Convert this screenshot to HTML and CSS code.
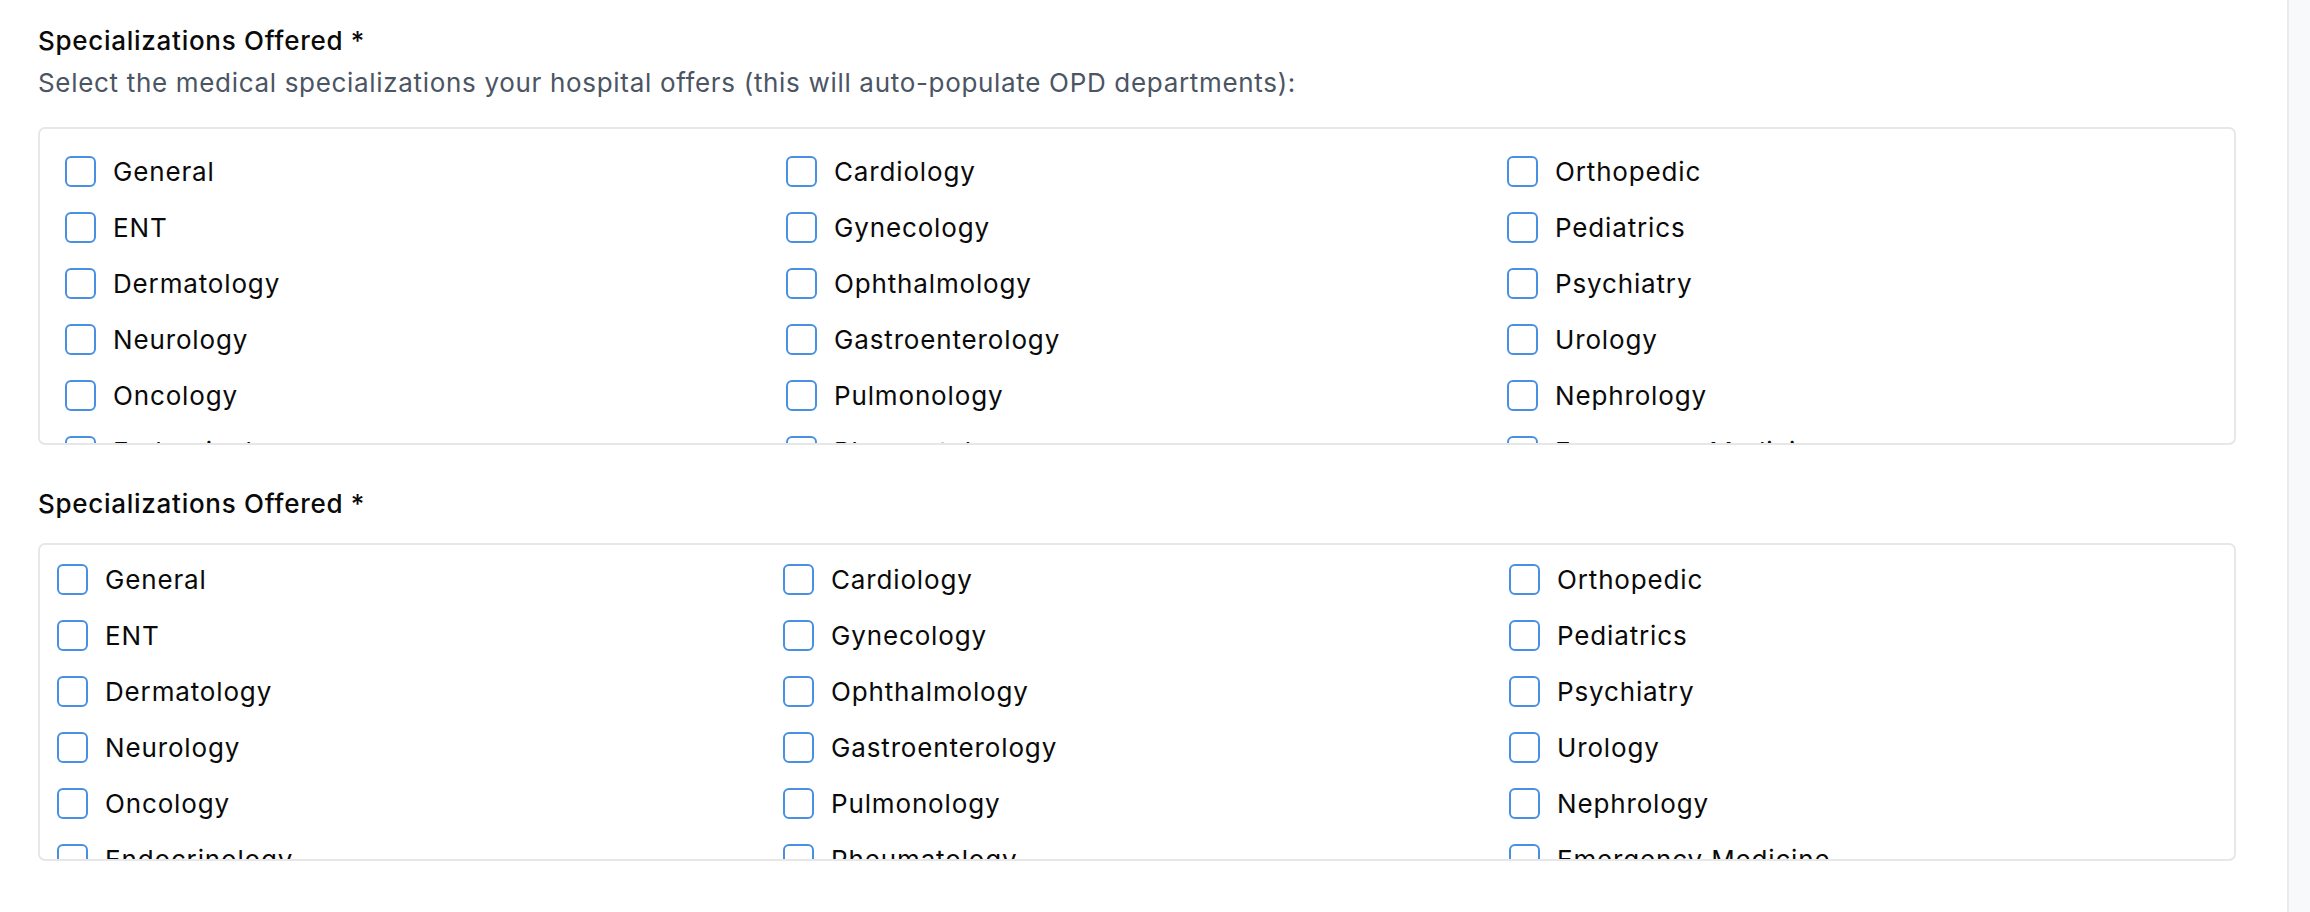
FILE: index.html
```html
<!DOCTYPE html>
<html lang="en">
<head>
<meta charset="utf-8">
<title>Specializations</title>
<link rel="stylesheet" href="styles.css">
</head>
<body>
<div class="page">
  <main class="content">
    <section class="field">
      <h2 class="field-label">Specializations Offered *</h2>
      <p class="field-hint">Select the medical specializations your hospital offers (this will auto-populate OPD departments):</p>
      <div class="box box-a">
        <div class="grid grid-a">
          <label class="opt"><input type="checkbox" class="cb"><span class="opt-text">General</span></label>
          <label class="opt"><input type="checkbox" class="cb"><span class="opt-text">Cardiology</span></label>
          <label class="opt"><input type="checkbox" class="cb"><span class="opt-text">Orthopedic</span></label>
          <label class="opt"><input type="checkbox" class="cb"><span class="opt-text">ENT</span></label>
          <label class="opt"><input type="checkbox" class="cb"><span class="opt-text">Gynecology</span></label>
          <label class="opt"><input type="checkbox" class="cb"><span class="opt-text">Pediatrics</span></label>
          <label class="opt"><input type="checkbox" class="cb"><span class="opt-text">Dermatology</span></label>
          <label class="opt"><input type="checkbox" class="cb"><span class="opt-text">Ophthalmology</span></label>
          <label class="opt"><input type="checkbox" class="cb"><span class="opt-text">Psychiatry</span></label>
          <label class="opt"><input type="checkbox" class="cb"><span class="opt-text">Neurology</span></label>
          <label class="opt"><input type="checkbox" class="cb"><span class="opt-text">Gastroenterology</span></label>
          <label class="opt"><input type="checkbox" class="cb"><span class="opt-text">Urology</span></label>
          <label class="opt"><input type="checkbox" class="cb"><span class="opt-text">Oncology</span></label>
          <label class="opt"><input type="checkbox" class="cb"><span class="opt-text">Pulmonology</span></label>
          <label class="opt"><input type="checkbox" class="cb"><span class="opt-text">Nephrology</span></label>
          <label class="opt"><input type="checkbox" class="cb"><span class="opt-text">Endocrinology</span></label>
          <label class="opt"><input type="checkbox" class="cb"><span class="opt-text">Rheumatology</span></label>
          <label class="opt"><input type="checkbox" class="cb"><span class="opt-text">Emergency Medicine</span></label>
        </div>
      </div>
    </section>
    <section class="field field-second">
      <h2 class="field-label">Specializations Offered *</h2>
      <div class="box box-b">
        <div class="grid grid-b">
          <label class="opt"><input type="checkbox" class="cb"><span class="opt-text">General</span></label>
          <label class="opt"><input type="checkbox" class="cb"><span class="opt-text">Cardiology</span></label>
          <label class="opt"><input type="checkbox" class="cb"><span class="opt-text">Orthopedic</span></label>
          <label class="opt"><input type="checkbox" class="cb"><span class="opt-text">ENT</span></label>
          <label class="opt"><input type="checkbox" class="cb"><span class="opt-text">Gynecology</span></label>
          <label class="opt"><input type="checkbox" class="cb"><span class="opt-text">Pediatrics</span></label>
          <label class="opt"><input type="checkbox" class="cb"><span class="opt-text">Dermatology</span></label>
          <label class="opt"><input type="checkbox" class="cb"><span class="opt-text">Ophthalmology</span></label>
          <label class="opt"><input type="checkbox" class="cb"><span class="opt-text">Psychiatry</span></label>
          <label class="opt"><input type="checkbox" class="cb"><span class="opt-text">Neurology</span></label>
          <label class="opt"><input type="checkbox" class="cb"><span class="opt-text">Gastroenterology</span></label>
          <label class="opt"><input type="checkbox" class="cb"><span class="opt-text">Urology</span></label>
          <label class="opt"><input type="checkbox" class="cb"><span class="opt-text">Oncology</span></label>
          <label class="opt"><input type="checkbox" class="cb"><span class="opt-text">Pulmonology</span></label>
          <label class="opt"><input type="checkbox" class="cb"><span class="opt-text">Nephrology</span></label>
          <label class="opt"><input type="checkbox" class="cb"><span class="opt-text">Endocrinology</span></label>
          <label class="opt"><input type="checkbox" class="cb"><span class="opt-text">Rheumatology</span></label>
          <label class="opt"><input type="checkbox" class="cb"><span class="opt-text">Emergency Medicine</span></label>
        </div>
      </div>
    </section>
  </main>
  <div class="scroll-track"></div>
</div>
</body>
</html>
```

FILE: styles.css
```css
* {
  box-sizing: border-box;
}

html, body {
  margin: 0;
  padding: 0;
  height: 100%;
  background: #ffffff;
}

body {
  font-family: Inter, "Liberation Sans", Arial, sans-serif;
  font-size: 26px;
  line-height: 36px;
  color: #0a0a0a;
  overflow: hidden;
}

.page {
  display: flex;
  height: 912px;
}

.content {
  flex: 1;
  min-width: 0;
  padding: 23px 51px 0 38px;
}

.scroll-track {
  width: 23px;
  flex: none;
  background: #f8f9fb;
  border-left: 2px solid #ebebeb;
}

.field {
  margin: 0;
}

.field-second {
  margin-top: 41px;
}

.field-label {
  margin: 0;
  font-size: 26px;
  line-height: 36px;
  font-weight: 500;
  color: #0a0a0a;
  letter-spacing: 0.72px;
}

.field-hint {
  margin: 6px 0 0;
  font-size: 26px;
  line-height: 36px;
  color: #4b5563;
  letter-spacing: 0.68px;
}

.box {
  height: 318px;
  border: 2px solid #e7e7e7;
  border-radius: 7px;
  overflow: hidden;
  background: #ffffff;
}

.box-a {
  margin-top: 26px;
  padding: 22px 25px 0;
}

.box-b {
  margin-top: 21px;
  padding: 14px 17px 0;
}

.grid {
  display: grid;
  grid-template-columns: repeat(3, 1fr);
  row-gap: 15px;
}

.grid-a {
  column-gap: 19px;
}

.grid-b {
  column-gap: 18px;
}

.opt {
  display: flex;
  align-items: center;
  gap: 17px;
  height: 41px;
  cursor: pointer;
}

.cb {
  appearance: none;
  -webkit-appearance: none;
  margin: 0;
  flex: none;
  width: 31px;
  height: 31px;
  border: 2px solid #4a90e2;
  border-radius: 6px;
  background: #ffffff;
}

.opt-text {
  font-size: 26px;
  line-height: 41px;
  color: #0a0a0a;
  letter-spacing: 0.85px;
  white-space: nowrap;
}
```
